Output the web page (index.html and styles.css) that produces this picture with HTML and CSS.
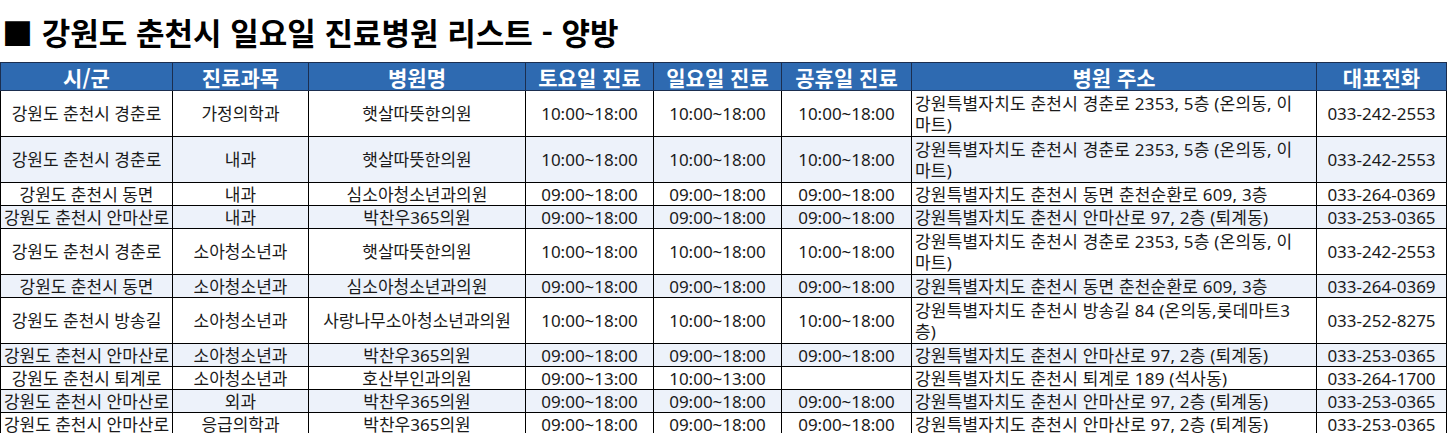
FILE: index.html
```html
<!DOCTYPE html>
<html lang="ko">
<head>
<meta charset="utf-8">
<title>강원도 춘천시 일요일 진료병원 리스트 - 양방</title>
<link rel="stylesheet" href="styles.css">
</head>
<body>
<h1 class="title">■ 강원도 춘천시 일요일 진료병원 리스트 - 양방</h1>
<table class="list">
  <colgroup>
    <col class="c-city"><col class="c-dept"><col class="c-name"><col class="c-time"><col class="c-time"><col class="c-time2"><col class="c-addr"><col class="c-tel">
  </colgroup>
  <thead>
    <tr class="head">
      <th>시/군</th><th>진료과목</th><th>병원명</th><th>토요일 진료</th><th>일요일 진료</th><th>공휴일 진료</th><th>병원 주소</th><th>대표전화</th>
    </tr>
  </thead>
  <tbody>
    <tr class="tall">
      <td><div class="ctr">강원도 춘천시 경춘로</div></td><td><div class="ctr">가정의학과</div></td><td><div class="ctr">햇살따뜻한의원</div></td><td><div class="ctr">10:00~18:00</div></td><td><div class="ctr">10:00~18:00</div></td><td><div class="ctr">10:00~18:00</div></td><td class="addr">강원특별자치도 춘천시 경춘로 2353, 5층 (온의동, 이마트)</td><td><div class="ctr">033-242-2553</div></td>
    </tr>
    <tr class="tall alt">
      <td><div class="ctr">강원도 춘천시 경춘로</div></td><td><div class="ctr">내과</div></td><td><div class="ctr">햇살따뜻한의원</div></td><td><div class="ctr">10:00~18:00</div></td><td><div class="ctr">10:00~18:00</div></td><td><div class="ctr">10:00~18:00</div></td><td class="addr">강원특별자치도 춘천시 경춘로 2353, 5층 (온의동, 이마트)</td><td><div class="ctr">033-242-2553</div></td>
    </tr>
    <tr class="short">
      <td><div class="ctr">강원도 춘천시 동면</div></td><td><div class="ctr">내과</div></td><td><div class="ctr">심소아청소년과의원</div></td><td><div class="ctr">09:00~18:00</div></td><td><div class="ctr">09:00~18:00</div></td><td><div class="ctr">09:00~18:00</div></td><td class="addr">강원특별자치도 춘천시 동면 춘천순환로 609, 3층</td><td><div class="ctr">033-264-0369</div></td>
    </tr>
    <tr class="short alt">
      <td><div class="ctr">강원도 춘천시 안마산로</div></td><td><div class="ctr">내과</div></td><td><div class="ctr">박찬우365의원</div></td><td><div class="ctr">09:00~18:00</div></td><td><div class="ctr">09:00~18:00</div></td><td><div class="ctr">09:00~18:00</div></td><td class="addr">강원특별자치도 춘천시 안마산로 97, 2층 (퇴계동)</td><td><div class="ctr">033-253-0365</div></td>
    </tr>
    <tr class="tall">
      <td><div class="ctr">강원도 춘천시 경춘로</div></td><td><div class="ctr">소아청소년과</div></td><td><div class="ctr">햇살따뜻한의원</div></td><td><div class="ctr">10:00~18:00</div></td><td><div class="ctr">10:00~18:00</div></td><td><div class="ctr">10:00~18:00</div></td><td class="addr">강원특별자치도 춘천시 경춘로 2353, 5층 (온의동, 이마트)</td><td><div class="ctr">033-242-2553</div></td>
    </tr>
    <tr class="short alt">
      <td><div class="ctr">강원도 춘천시 동면</div></td><td><div class="ctr">소아청소년과</div></td><td><div class="ctr">심소아청소년과의원</div></td><td><div class="ctr">09:00~18:00</div></td><td><div class="ctr">09:00~18:00</div></td><td><div class="ctr">09:00~18:00</div></td><td class="addr">강원특별자치도 춘천시 동면 춘천순환로 609, 3층</td><td><div class="ctr">033-264-0369</div></td>
    </tr>
    <tr class="tall">
      <td><div class="ctr">강원도 춘천시 방송길</div></td><td><div class="ctr">소아청소년과</div></td><td><div class="ctr">사랑나무소아청소년과의원</div></td><td><div class="ctr">10:00~18:00</div></td><td><div class="ctr">10:00~18:00</div></td><td><div class="ctr">10:00~18:00</div></td><td class="addr">강원특별자치도 춘천시 방송길 84 (온의동,롯데마트3층)</td><td><div class="ctr">033-252-8275</div></td>
    </tr>
    <tr class="short alt">
      <td><div class="ctr">강원도 춘천시 안마산로</div></td><td><div class="ctr">소아청소년과</div></td><td><div class="ctr">박찬우365의원</div></td><td><div class="ctr">09:00~18:00</div></td><td><div class="ctr">09:00~18:00</div></td><td><div class="ctr">09:00~18:00</div></td><td class="addr">강원특별자치도 춘천시 안마산로 97, 2층 (퇴계동)</td><td><div class="ctr">033-253-0365</div></td>
    </tr>
    <tr class="short">
      <td><div class="ctr">강원도 춘천시 퇴계로</div></td><td><div class="ctr">소아청소년과</div></td><td><div class="ctr">호산부인과의원</div></td><td><div class="ctr">09:00~13:00</div></td><td><div class="ctr">10:00~13:00</div></td><td></td><td class="addr">강원특별자치도 춘천시 퇴계로 189 (석사동)</td><td><div class="ctr">033-264-1700</div></td>
    </tr>
    <tr class="short alt">
      <td><div class="ctr">강원도 춘천시 안마산로</div></td><td><div class="ctr">외과</div></td><td><div class="ctr">박찬우365의원</div></td><td><div class="ctr">09:00~18:00</div></td><td><div class="ctr">09:00~18:00</div></td><td><div class="ctr">09:00~18:00</div></td><td class="addr">강원특별자치도 춘천시 안마산로 97, 2층 (퇴계동)</td><td><div class="ctr">033-253-0365</div></td>
    </tr>
    <tr class="short">
      <td><div class="ctr">강원도 춘천시 안마산로</div></td><td><div class="ctr">응급의학과</div></td><td><div class="ctr">박찬우365의원</div></td><td><div class="ctr">09:00~18:00</div></td><td><div class="ctr">09:00~18:00</div></td><td><div class="ctr">09:00~18:00</div></td><td class="addr">강원특별자치도 춘천시 안마산로 97, 2층 (퇴계동)</td><td><div class="ctr">033-253-0365</div></td>
    </tr>
  </tbody>
</table>
</body>
</html>
```

FILE: styles.css
```css
html, body {
  margin: 0;
  padding: 0;
  background: #ffffff;
}

body {
  font-family: "Noto Sans", "Noto Sans CJK KR", sans-serif;
  color: #1a1a1a;
  overflow: hidden;
}

.title {
  margin: 0;
  height: 62px;
  line-height: 64px;
  padding-left: 2px;
  font-family: "Noto Sans CJK KR", "Noto Sans", sans-serif;
  font-size: 31px;
  font-weight: 700;
  color: #000000;
  white-space: nowrap;
}

.list {
  border-collapse: collapse;
  table-layout: fixed;
  width: 1447px;
  font-size: 17px;
}

.c-city { width: 172px; }
.c-dept { width: 136px; }
.c-name { width: 217px; }
.c-time { width: 128px; }
.c-time2 { width: 130px; }
.c-addr { width: 405px; }
.c-tel { width: 130px; }

.list th,
.list td {
  border: 1px solid #000000;
  padding: 0;
  vertical-align: middle;
  overflow: hidden;
}

.head {
  height: 28px;
}

.list .head th {
  background: #2e6ab1;
  color: #ffffff;
  font-family: "Noto Sans CJK KR", "Noto Sans", sans-serif;
  font-size: 21px;
  font-weight: 700;
  line-height: 26px;
  text-align: center;
  white-space: nowrap;
  border-color: #1b2e4f;
}

.short { height: 23px; }
.tall { height: 46px; }

.alt td { background: #edf2fa; }

.ctr {
  display: flex;
  justify-content: center;
  white-space: nowrap;
  line-height: 21px;
}

.list td.addr {
  text-align: left;
  padding: 0 16px 0 3px;
  line-height: 21px;
  letter-spacing: 0.2px;
}
```
